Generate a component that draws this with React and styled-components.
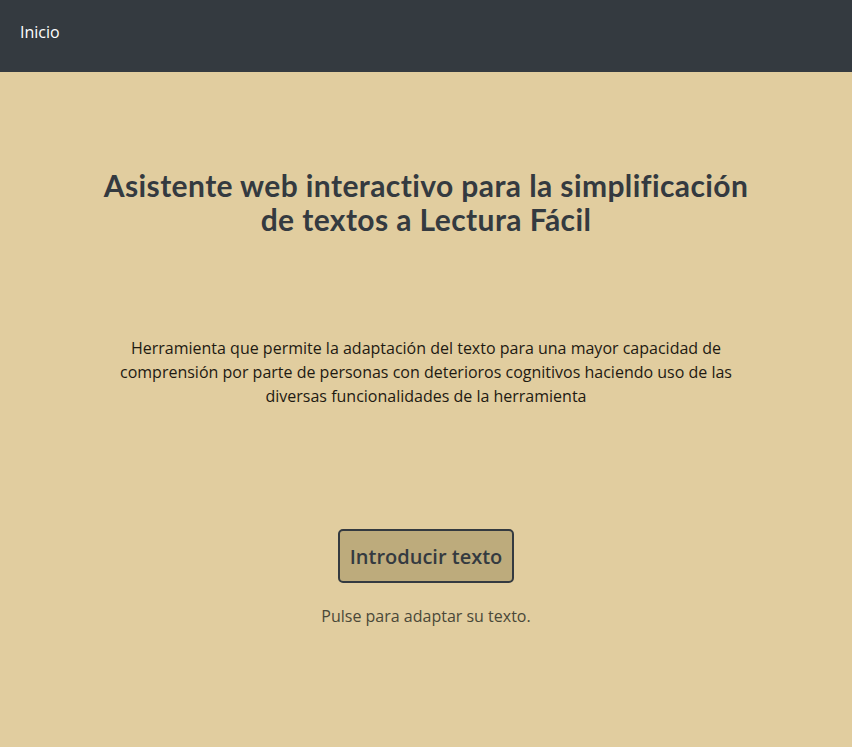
import React from "react";
import styled, { createGlobalStyle } from "styled-components";

const GlobalStyle = createGlobalStyle`
  html, body {
    margin: 0;
    padding: 0;
    background: #e1cd9f;
  }
  body {
    font-family: "Open Sans", "Liberation Sans", sans-serif;
  }
`

const Page = styled.div`
  min-height: 747px;
  background: #e1cd9f;
  display: flex;
  flex-direction: column;
`

const NavBar = styled.nav`
  height: 72px;
  background: #343a40;
  display: flex;
  align-items: center;
  padding: 0 20px;
  box-sizing: border-box;
  a{
    color: #ffffff;
    font-size: 16px;
    text-decoration: none;
    margin-top: -8px;
  }
`

const Main = styled.main`
  display: flex;
  flex-direction: column;
  align-items: center;
  text-align: center;
`

const Title = styled.h1`
  font-family: "Lato", "Noto Sans", sans-serif;
  font-weight: 700;
  font-size: 30px;
  letter-spacing: 0.4px;
  line-height: 34px;
  color: #343a40;
  max-width: 664px;
  margin: 96px 0 0;
`

const Description = styled.p`
  font-size: 16px;
  line-height: 24px;
  color: #1e1a12;
  max-width: 630px;
  margin: 100px 0 0;
`

const MainButton = styled.button`
  margin-top: 121px;
  font-family: "Open Sans", sans-serif;
  font-size: 20px;
  font-weight: 600;
  color: #343a40;
  background: #bdab7c;
  border: 2px solid #343a40;
  border-radius: 5px;
  padding: 0 10px;
  height: 54px;
  white-space: nowrap;
  cursor: pointer;
`

const Hint = styled.p`
  font-size: 16px;
  line-height: 24px;
  color: #4a4838;
  margin: 21px 0 0;
`

const App = () => {
  return(
    <Page>
      <GlobalStyle />
      <NavBar>
        <a href="#">Inicio</a>
      </NavBar>
      <Main>
        <Title>Asistente web interactivo para la simplificación de textos a Lectura Fácil</Title>
        <Description>
          Herramienta que permite la adaptación del texto para una mayor capacidad de comprensión por parte de personas con deterioros cognitivos haciendo uso de las diversas funcionalidades de la herramienta
        </Description>
        <MainButton type="button">Introducir texto</MainButton>
        <Hint>Pulse para adaptar su texto.</Hint>
      </Main>
    </Page>
  )
}

export default App;
